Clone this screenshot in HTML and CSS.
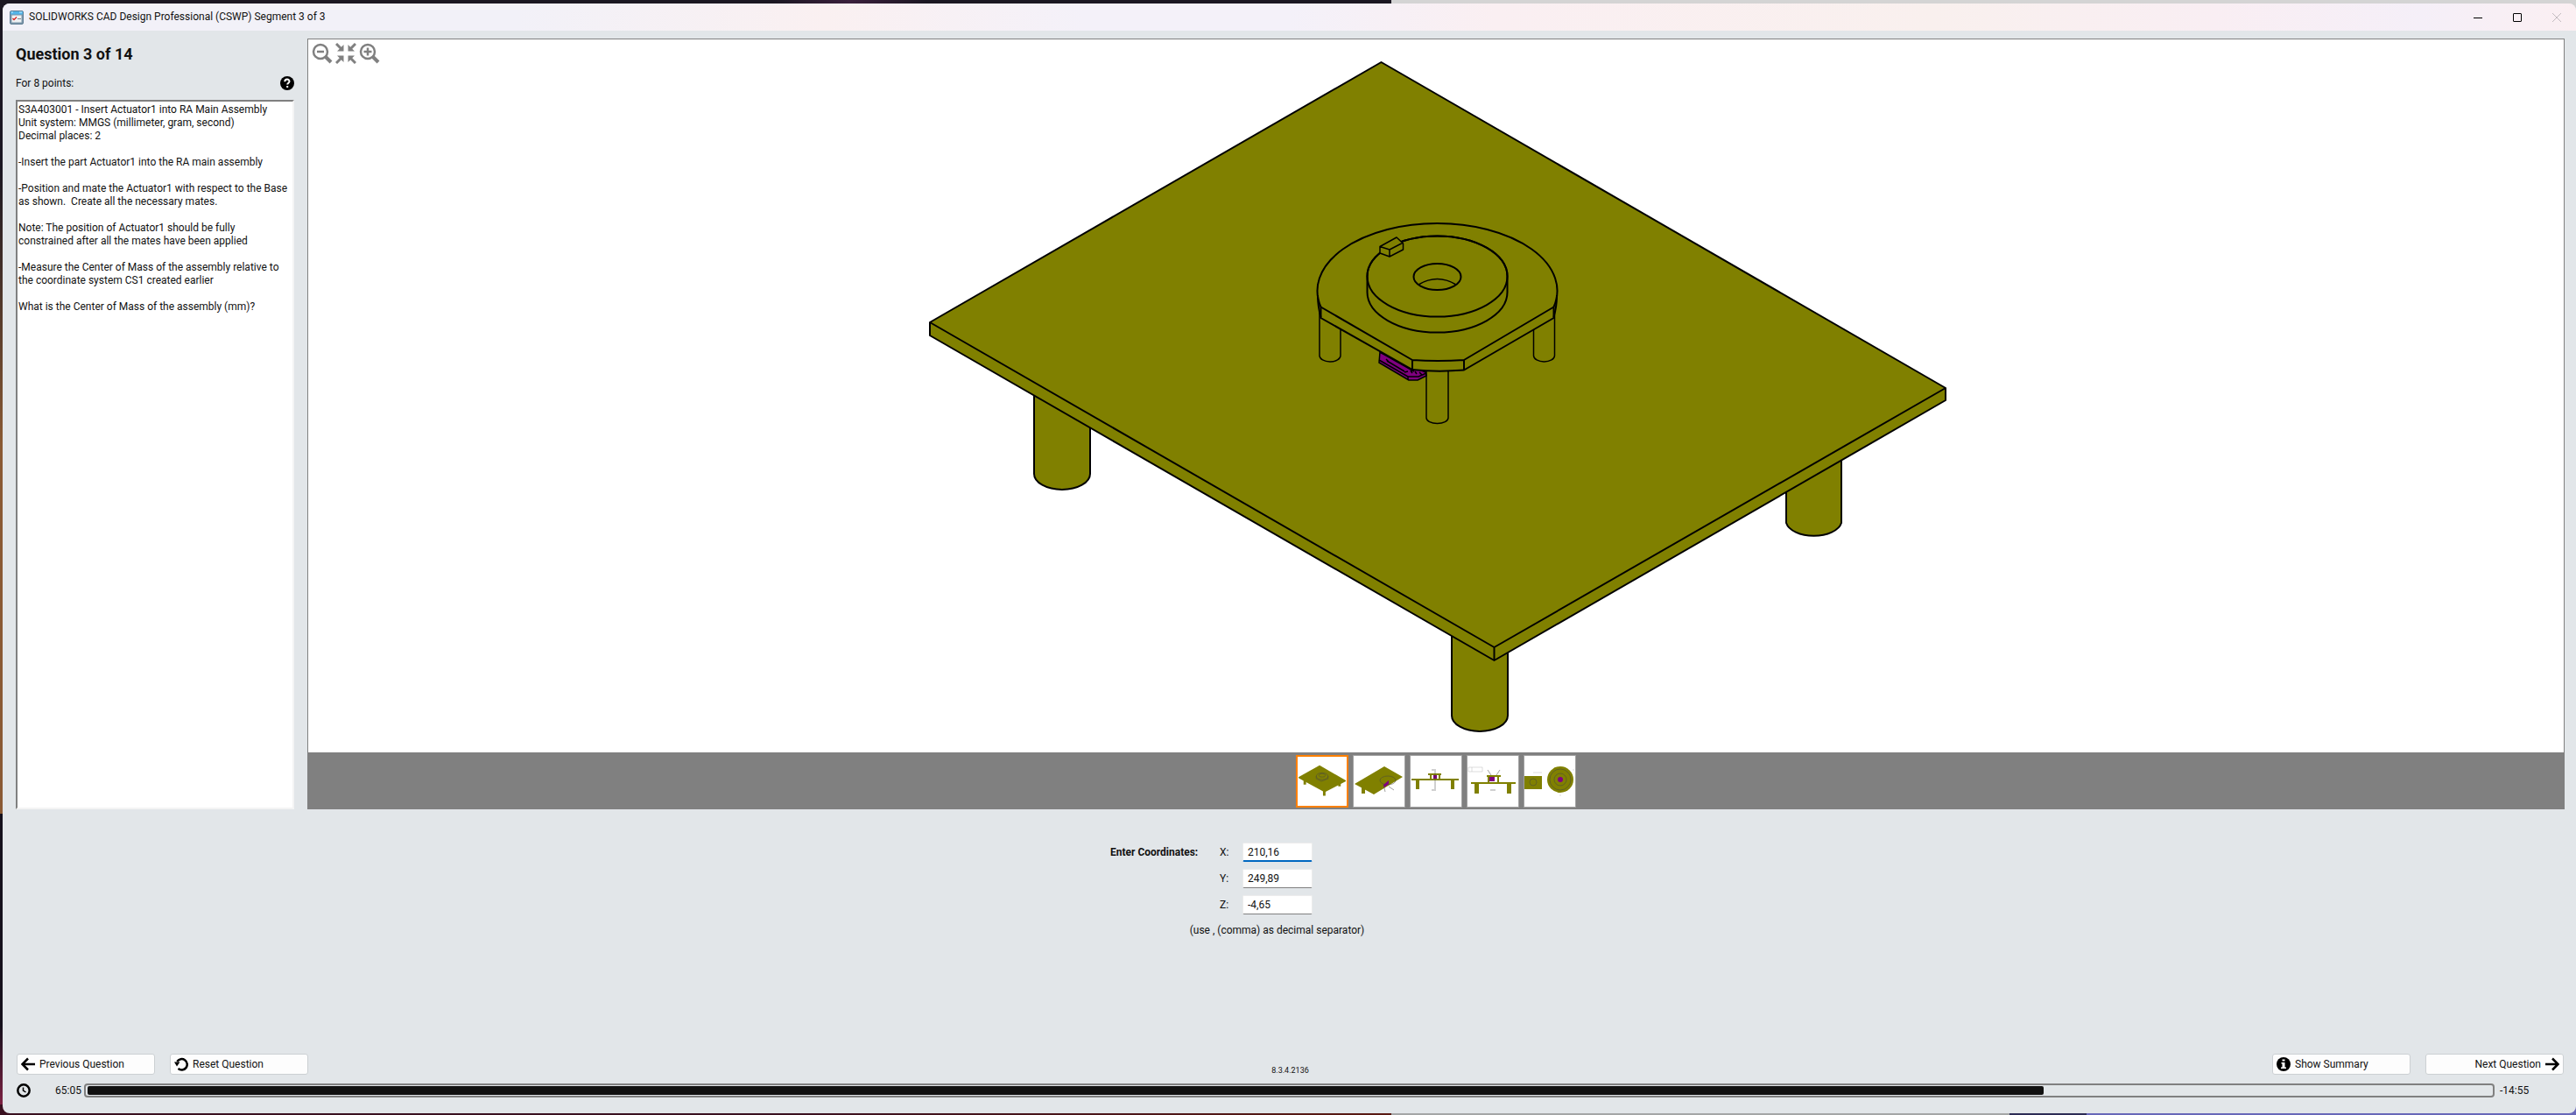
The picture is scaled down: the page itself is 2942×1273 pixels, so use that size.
FILE: index.html
```html
<!DOCTYPE html>
<html lang="en">
<head>
<meta charset="utf-8">
<title>SOLIDWORKS CAD Design Professional (CSWP) Segment 3 of 3</title>
<link rel="stylesheet" href="styles.css">
</head>
<body>
<div class="window">
  <header class="titlebar">
    <svg class="app-icon" viewBox="0 0 16 16"><rect x=".5" y=".5" width="15" height="15" rx="1.500" fill="#7d97aa" stroke="#5f7d94"/><path d="M1 1h14v3.500H1z" fill="#53b4e8"/><path d="M2 2h2M11 2h3" stroke="#c8ecff"/><path d="M2.500 5.500h11v8h-11z" fill="#eef1f3"/><path d="M3.500 9l1.500 1.500L8 7.500" fill="none" stroke="#d8201c" stroke-width="1.300"/><path d="M9 9.500h4" stroke="#7b8790"/></svg>
    <h1 class="title">SOLIDWORKS CAD Design Professional (CSWP) Segment 3 of 3</h1>
    <div class="caption-buttons">
      <button class="caption" aria-label="Minimize"><svg viewBox="0 0 10 10"><path d="M0 5.500h10" stroke="#000"/></svg></button>
      <button class="caption" aria-label="Maximize"><svg viewBox="0 0 10 10"><rect x=".5" y=".5" width="9" height="9" rx=".5" fill="none" stroke="#000"/></svg></button>
      <button class="caption" aria-label="Close" disabled><svg viewBox="0 0 10 10"><path d="M0 0l10 10M10 0L0 10" stroke="#c3bcc0"/></svg></button>
    </div>
  </header>
  <main class="content">
    <section class="question">
      <h2 class="heading">Question 3 of 14</h2>
      <div class="points"><span>For 8 points:</span>
        <button class="icon-button" aria-label="Help"><svg class="icon" viewBox="0 0 16 16"><circle cx="8" cy="8" r="8"/><path d="M5.300 6.200C5.300 2.600 10.700 2.800 10.500 6c-.1 1.700-2.300 1.700-2.300 3.600" fill="none" stroke="#fff" stroke-width="2"/><path d="M7.200 11h2v2h-2z" fill="#fff"/></svg></button>
      </div>
      <div class="statement">S3A403001 - Insert Actuator1 into RA Main Assembly
Unit system: MMGS (millimeter, gram, second)
Decimal places: 2

-Insert the part Actuator1 into the RA main assembly

-Position and mate the Actuator1 with respect to the Base
as shown.&nbsp; Create all the necessary mates.

Note: The position of Actuator1 should be fully
constrained after all the mates have been applied

-Measure the Center of Mass of the assembly relative to
the coordinate system CS1 created earlier

What is the Center of Mass of the assembly (mm)?</div>
    </section>
    <section class="viewer">
      <div class="stage">
        <svg class="drawing" viewBox="352 45 2576 814">
          <g class="model">
            <path d="M1181 440V541A32 18 0 0 0 1245 541V440zM2040 520V597A32 18 0 0 0 2103 597V500zM1658 700V817A32 18 0 0 0 1722 817V700z"/>
            <path d="M1577.500 71L2222 443V457L1706.500 754L1062 383V368z"/>
            <path class="edge" d="M1062 368L1706.500 739L2222 443M1706.500 739V754"/>
            <path class="fine" d="M1507 355V406A12 7 0 0 0 1531 406V370M1751.500 370V406A12 7 0 0 0 1775.500 406V355"/>
            <path class="actuator" d="M1576 402L1628 425L1629 429L1619 434H1609L1575 414z"/>
            <path class="actuator-lines" d="M1575 411L1608 430H1620L1629 426M1584 412L1604 424M1583 410l3 3M1604 425l4-1M1611 423l2 3M1616 424l2 3M1621 425l3 3M1608 430v4M1576 402L1615 424"/>
            <path class="fine" d="M1629 420V477A12.500 6.500 0 0 0 1654 477V420"/>
            <path d="M1508.500 350.500A137 77 0 1 1 1774.500 350.500V363L1672 422.500Q1641 425 1613 422L1508.500 363z"/>
            <path class="edge" d="M1508.500 350.500L1613 411Q1642 413 1672 411L1774.500 350.500M1613 411V422M1672 411V422.500M1505 337Q1505 350 1508.500 362M1778 337Q1778 350 1774.500 362"/>
            <path d="M1561.500 315.500V333.500A80 46 0 0 0 1721.500 333.500V315.500A80 46 0 0 0 1561.500 315.500"/>
            <ellipse class="edge" cx="1641.500" cy="315.500" rx="80" ry="46"/>
            <ellipse class="edge" cx="1641.500" cy="316" rx="27" ry="15"/>
            <path class="fine" d="M1620 325Q1641.500 312 1663 325"/>
            <path class="key" d="M1576 281.500L1595 271L1602.500 278V285L1587 293L1576 289zM1576 281.500L1587 285V293M1587 285L1602.500 277"/>
          </g>
        </svg>
        <div class="zoom-tools">
          <button class="icon-button" aria-label="Zoom out"><svg class="tool" viewBox="0 0 24 24"><circle cx="10" cy="10" r="8"/><path d="M6 10h8" /><path class="handle" d="M16 16l6 6"/></svg></button>
          <button class="icon-button" aria-label="Fit to window"><svg class="tool arrows" viewBox="0 0 24 24"><path d="M1 1l6 6M23 1l-6 6M1 23l6-6M23 23l-6-6"/><path class="heads" d="M9.500 2v7.500H2zM14.500 2v7.500H22zM9.500 22v-7.500H2zM14.500 22v-7.500H22z"/></svg></button>
          <button class="icon-button" aria-label="Zoom in"><svg class="tool" viewBox="0 0 24 24"><circle cx="10" cy="10" r="8"/><path d="M5.500 10h9M10 5.500v9"/><path class="handle" d="M16 16l6 6"/></svg></button>
        </div>
      </div>
      <div class="thumbs">
        <button class="thumb selected" aria-label="View 1"><svg viewBox="1 1 58 58"><path d="M8 27h3v7H8zM49 30h3v6h-3zM31 40h3v7h-3z"/><path d="M27 11L58 29v1L33 43L2 26v-1z"/><g class="ink"><ellipse cx="30" cy="24" rx="7" ry="4"/><ellipse cx="30" cy="23" rx="4" ry="2"/><path d="M23 24v3l6 3l8-3v-3"/></g></svg></button>
        <button class="thumb" aria-label="View 2"><svg viewBox="1 1 58 58"><path d="M10 37h4v7h-4zM36 13L57 25L24 45L2 33z"/><g class="ink"><ellipse cx="40" cy="29" rx="9" ry="5"/><path d="M35 34l2 8M41 36l6 4"/></g><path class="purple" d="M35 34l6-5v4l-5 4z"/></svg></button>
        <button class="thumb" aria-label="View 3"><svg viewBox="1 1 58 58"><path d="M2 27h54v2H2zM7 28h4v11H7zM47 28h4v11h-4zM21 21h15v2H21zM23 22h2v6h-2zM33 22h2v6h-2z"/><path class="purple" d="M27 23h4v4h-4z"/><path class="ink" d="M29 16v25M25 17h3M25 40h3"/></svg></button>
        <button class="thumb" aria-label="View 4"><svg viewBox="1 1 58 58"><path d="M5 31h51v2H5zM9 32h5v12H9zM46 32h5v12h-5zM23 23h16v2H23zM24 24h2v7h-2zM35 24h2v7h-2z"/><path class="purple" d="M26 25h6v5h-6z"/><path class="ink" d="M24 17l4 6M38 17l-4 6M27 40h6"/><path class="ink faint" d="M2 14h16v5H2zM6 14v5"/></svg></button>
        <button class="thumb" aria-label="View 5"><svg viewBox="1 1 58 58"><path d="M1 24h20v15H1z"/><circle cx="42" cy="28" r="15"/><g class="ink"><circle cx="11" cy="31" r="4"/><circle cx="42" cy="28" r="12"/><circle cx="42" cy="28" r="7"/><path class="faint" d="M11 20h10M56 17h2M41 46h2"/></g><circle class="purple" cx="42" cy="28" r="3"/></svg></button>
      </div>
    </section>
  </main>
  <form class="answer">
    <div class="fields">
      <span class="prompt">Enter Coordinates:</span>
      <label for="x">X:</label><input id="x" class="focused" value="210,16">
      <label for="y">Y:</label><input id="y" value="249,89">
      <label for="z">Z:</label><input id="z" value="-4,65">
    </div>
    <p class="hint">(use , (comma) as decimal separator)</p>
  </form>
  <footer class="footer">
    <nav class="actions">
      <button class="action"><svg class="icon" viewBox="0 0 16 16"><path class="stroke" d="M16 8H2M8 1.500L1.500 8L8 14.500"/></svg>Previous Question</button>
      <button class="action"><svg class="icon" viewBox="0 0 16 16"><path class="stroke" d="M3.300 5A6.200 6.200 0 1 1 4.500 13"/><path d="M0 5.500h6.500L3 10.500z"/></svg>Reset Question</button>
      <span class="version">8.3.4.2136</span>
      <button class="action"><svg class="icon" viewBox="0 0 16 16"><circle cx="8" cy="8" r="8"/><path d="M6.500 2.500h3v2h-3zM5.500 6h4v5.500h1.500v1.500h-6v-1.500h1.500v-4h-1z" fill="#fff"/></svg>Show Summary</button>
      <button class="action next">Next Question<svg class="icon" viewBox="0 0 16 16"><path class="stroke" d="M0 8h14M8 1.500L14.500 8L8 14.500"/></svg></button>
    </nav>
    <div class="timer">
      <svg class="icon" viewBox="0 0 16 16"><circle class="stroke" cx="8" cy="8" r="6.700"/><path d="M7.500 4.500V8l3 2" fill="none" stroke="#000" stroke-width="1.500"/></svg>
      <span class="elapsed">65:05</span>
      <div class="track"><div class="fill" style="width:81.400%"></div></div>
      <span class="remaining">-14:55</span>
    </div>
  </footer>
</div>
</body>
</html>
```
FILE: styles.css
```css
* { box-sizing: border-box; }
body {
  margin: 0;
  min-height: 100vh;
  display: flex;
  padding: 4px 0 2px 3px;
  background:
    linear-gradient(90deg, #1b1722 0 30%, #3a1f3c 33%, #1b1722 36% 54%, #d4d4d4 54%) top / 100% 12px no-repeat,
    linear-gradient(90deg, #3a1020 0 30%, #5a1a12 54%, #a4a6a6 54% 78%, #2c2c55 78% 81%, #6868b8 81%) bottom / 100% 12px no-repeat,
    linear-gradient(#1b1722 0 15%, #8a5a34 40% 73%, #15101c 73% 92%, #8a2448) left / 12px 100% no-repeat,
    #1b1722;
  font: 12px/15px Roboto, "Open Sans", "Noto Sans", sans-serif;
  color: #111;
}
button { font: inherit; color: inherit; }
h1, h2, p { margin: 0; }
svg { display: block; }
.window {
  flex: 1;
  display: flex;
  flex-direction: column;
  background: #e2e6e9;
  border-radius: 8px;
  overflow: hidden;
}
.titlebar {
  display: flex;
  align-items: center;
  height: 31px;
  padding-left: 8px;
  gap: 6px;
  background: linear-gradient(90deg, #f2f1f8 0 20%, #faf0f1 32%, #f4f1f9 42% 50%, #faeff2 58%, #f9f0ee 75%, #f9eef3 86%, #f5eff8 94%, #fbeff2);
}
.app-icon { width: 16px; height: 16px; }
.title { font-size: 12px; font-weight: 400; }
.caption-buttons { display: flex; margin-left: auto; }
.caption { width: 45px; height: 30px; padding: 0; border: 0; background: none; display: grid; place-items: center; }
.caption svg { width: 10px; height: 10px; }
.content { flex: 1; display: flex; padding: 9px 13px 0 15px; gap: 15px; }
.question { width: 318px; display: flex; flex-direction: column; }
.heading { font-size: 18px; line-height: 24px; padding-top: 6px; font-weight: 700; }
.points { display: flex; align-items: center; justify-content: space-between; height: 24px; margin: 9px 0 7px; }
.icon-button { border: 0; padding: 0; background: none; }
.icon { width: 16px; height: 16px; flex: none; }
.statement {
  flex: 1;
  white-space: pre-wrap;
  padding: 2px 1px;
  background: #fff;
  border: 2px solid #808080;
  border-right-color: #f4f4f4;
  border-bottom-color: #f4f4f4;
}
.viewer { flex: 1; display: flex; flex-direction: column; }
.stage { flex: 1; position: relative; background: #fff; border: 1px solid #808080; border-bottom: 0; }
.drawing { width: 100%; height: 100%; }
.model path, .model ellipse { fill: #808000; stroke: #000; stroke-width: 2; stroke-linejoin: round; }
.model .edge { fill: none; }
.model .fine { stroke-width: 1.500; fill: none; }
.model .key { stroke-width: 1.500; }
.model .actuator { fill: #800080; stroke-width: 1.500; }
.model .actuator-lines { fill: none; stroke-width: 1.500; }
.zoom-tools { position: absolute; left: 4px; top: 4px; display: flex; gap: 3px; }
.tool { width: 24px; height: 24px; fill: none; stroke: #808080; stroke-width: 2.500; }
.tool .handle { stroke-width: 4; }
.arrows { stroke-width: 3; }
.arrows .heads { fill: #808080; stroke: none; }
.thumbs { height: 65px; display: flex; justify-content: center; align-items: center; gap: 5px; padding-top: 1px; background: #808080; }
.thumb { width: 60px; height: 60px; padding: 0; border: 1px solid #a0a0a0; background: #fff; }
.thumb.selected { border: 2px solid #ff8000; }
.thumb svg { width: 100%; height: 100%; fill: #808000; }
.thumb .ink { fill: none; stroke: #444; stroke-opacity: .5; }
.thumb .faint { stroke: #bbb; }
.thumb .purple { fill: #800080; }
.answer { display: flex; flex-direction: column; align-items: center; height: 279px; padding-top: 38px; }
.fields {
  display: grid;
  grid-template-columns: 109px 10px 80px;
  column-gap: 16px;
  row-gap: 8px;
  align-items: center;
  margin-right: 178px;
}
.fields label { grid-column: 2; }
.prompt { font-weight: 700; white-space: nowrap; }
.fields input {
  width: 80px;
  height: 22px;
  padding: 0 5px;
  border: 1px solid #ececec;
  border-bottom-color: #808080;
  border-radius: 2px;
  background: #fff;
  font: inherit;
  color: inherit;
  outline: 0;
}
.fields .focused { border-bottom: 2px solid #0067c0; }
.hint { margin: 11px 28px 0 0; }
.footer { padding: 0 14px 18px 16px; }
.actions { display: flex; gap: 17px; }
.action {
  display: flex;
  align-items: center;
  gap: 5px;
  width: 158px;
  height: 24px;
  padding: 0 4px;
  background: #fdfdfd;
  border: 1px solid #ccd0d3;
  border-radius: 3px;
}
.next { justify-content: flex-end; }
.stroke { fill: none; stroke: #000; stroke-width: 2.500; }
.version { flex: 1; font-size: 9px; text-align: center; align-self: flex-end; line-height: 10px; }
.timer { display: flex; align-items: center; margin-top: 10px; }
.elapsed { width: 58px; text-align: right; margin-right: 3px; }
.track { flex: 1; height: 16px; padding: 1px 2px; border: 2px solid #808080; border-radius: 4px; }
.fill { height: 10px; background: #111; border-radius: 2px; }
.remaining { width: 79px; padding-left: 6px; }
```
